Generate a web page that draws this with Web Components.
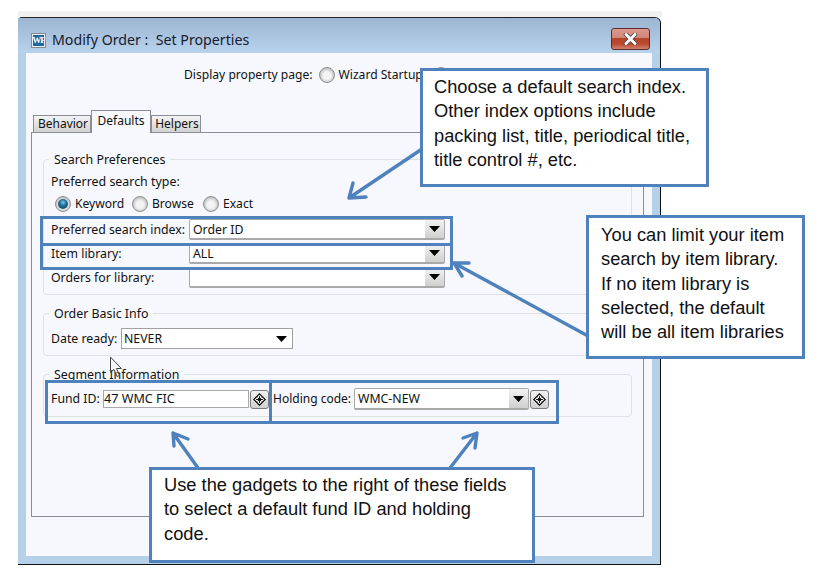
<!DOCTYPE html>
<html>
<head>
<meta charset="utf-8">
<style>
    html, body { margin: 0; height: 574px; overflow: hidden; background: #fff; }
    call-out.index { left: 420px; top: 68px; width: 289px; height: 119px; padding-top: 4px; }
    call-out.library { left: 586px; top: 215px; width: 219px; height: 144px; padding: 5px 0 0 12px; }
    call-out.gadgets { left: 149px; top: 467px; width: 386px; height: 96px; padding: 3px 0 0 12px; }
    hi-box.a { left: 40px; top: 216px; width: 413px; height: 30px; }
    hi-box.b { left: 40px; top: 243px; width: 413px; height: 27px; }
    hi-box.c { left: 45px; top: 380px; width: 227px; height: 44px; }
    hi-box.d { left: 269px; top: 380px; width: 290px; height: 44px; }
</style>
</head>
<body>

<app-window heading="Modify Order :  Set Properties">
    <page-switch></page-switch>
    <tab-strip>
        <ui-group heading="Search Preferences" style="--h:137px">
            <div style="font:12.4px/16px 'Noto Sans',sans-serif;color:#111;margin:6px 0 0 7px">Preferred search type:</div>
            <radio-row></radio-row>
            <combo-row label="Preferred search index:" value="Order ID"></combo-row>
            <combo-row label="Item library:" value="ALL"></combo-row>
            <combo-row label="Orders for library:" value=""></combo-row>
        </ui-group>
        <ui-group heading="Order Basic Info" style="--h:44px">
            <date-row></date-row>
        </ui-group>
        <ui-group heading="Segment Information" style="--h:44px">
            <segment-row></segment-row>
        </ui-group>
    </tab-strip>
</app-window>

<hi-box class="a"></hi-box>
<hi-box class="b"></hi-box>
<hi-box class="c"></hi-box>
<hi-box class="d"></hi-box>

<note-arrows></note-arrows>

<call-out class="index">Choose a default search index.<br>Other index options include<br>packing list, title, periodical title,<br>title control #, etc.</call-out>
<call-out class="library">You can limit your item<br>search by item library.<br>If no item library is<br>selected, the default<br>will be all item libraries</call-out>
<call-out class="gadgets">Use the gadgets to the right of these fields<br>to select a default fund ID and holding<br>code.</call-out>

<script>
const UI_FONT = "12.3px/16px 'Noto Sans', sans-serif";

class AppWindow extends HTMLElement {
    constructor(){
        super();
        this.attachShadow({mode: "open"});
    }
    connectedCallback(){
        this.shadowRoot.innerHTML = `
        <style>
            :host { display: block; width: 644px; margin: 11px 0 0 18px; }
            .strip { height: 6px; background: #f0f0f0; }
            .frame {
                height: 548px;
                margin-right: 1px;
                box-sizing: border-box;
                display: flex;
                flex-direction: column;
                border-top: 1px solid #222;
                border-right: 1px solid #111;
                border-bottom: 1px solid #111;
                border-top-left-radius: 4px;
                border-top-right-radius: 6px;
                background: #b7d0ea;
            }
            .title {
                height: 35px;
                box-sizing: border-box;
                padding-top: 9px;
                flex: none;
                display: flex;
                align-items: center;
                padding-left: 13px;
                gap: 6px;
                background: linear-gradient(#9bb5d2, #b9d2ec);
                border-top-right-radius: 6px;
            }
            .icon {
                width: 13px; height: 13px;
                border: 1px solid #8a8a8a;
                outline: 1px solid #e8eef4;
                outline-offset: -2px;
                background: #1d6a9c;
                color: #fff;
                font: bold 9px/13px "Liberation Serif", serif;
                text-align: center;
                letter-spacing: -1px;
            }
            .text {
                font: 14.2px/18px "Noto Sans", sans-serif;
                color: #16202c;
                white-space: pre;
            }
            .close {
                margin-left: auto;
                margin-right: 10px;
                margin-top: -2px;
                width: 39px; height: 22px;
                box-sizing: border-box;
                border: 1px solid #5a2a30;
                border-radius: 3px;
                background: linear-gradient(#dc9a8c 0, #cf8576 44%, #b5432b 46%, #bb4a30 75%, #d0836f 100%);
                display: flex;
                align-items: center;
                justify-content: center;
            }
            .client {
                flex: 1;
                margin: 0 8px 8px 8px;
                background: #f7f8fd;
                padding: 13px 8px 39px 5px;
                display: flex;
                flex-direction: column;
            }
        </style>
        <div class="strip"></div>
        <div class="frame">
            <div class="title">
                <span class="icon">WF</span>
                <span class="text">${this.getAttribute("heading")}</span>
                <span class="close">
                    <svg width="15" height="12" viewBox="0 0 15 12">
                        <path d="M3 1.5 L12 10.5 M12 1.5 L3 10.5" stroke="#4a3a3a" stroke-width="4.4" stroke-linecap="round" fill="none"/>
                        <path d="M3 1.5 L12 10.5 M12 1.5 L3 10.5" stroke="#fff" stroke-width="3" stroke-linecap="round" fill="none"/>
                    </svg>
                </span>
            </div>
            <div class="client"><slot></slot></div>
        </div>`;
    }
}

class UiRadio extends HTMLElement {
    constructor(){
        super();
        this.attachShadow({mode: "open"});
    }
    connectedCallback(){
        const on = this.hasAttribute("checked");
        this.shadowRoot.innerHTML = `
        <style>
            :host { display: inline-flex; align-items: center; gap: 4px; font: 12.1px/16px 'Noto Sans', sans-serif; color: #111; }
            i {
                width: 16px; height: 16px;
                flex: none;
                box-sizing: border-box;
                border-radius: 50%;
                border: 1px solid #8f8f8f;
                background: radial-gradient(circle at 50% 55%, #f4f4f4 0 35%, #c4c4c4 70%, #dedede 100%);
                display: flex;
                align-items: center;
                justify-content: center;
            }
            b {
                display: ${on ? "block" : "none"};
                width: 10px; height: 10px;
                border-radius: 50%;
                background: radial-gradient(circle at 50% 35%, #7fc7e8 0, #1f6f9a 40%, #0c3a58 100%);
            }
        </style>
        <i><b></b></i><slot></slot>`;
    }
}

class PageSwitch extends HTMLElement {
    constructor(){
        super();
        this.attachShadow({mode: "open"});
    }
    connectedCallback(){
        this.shadowRoot.innerHTML = `
        <style>
            :host { display: flex; align-items: center; height: 18px; padding-left: 153px; font: 12.1px/16px 'Noto Sans', sans-serif; color: #111; }
            span { margin-right: 6px; }
            ui-radio + ui-radio { margin-left: 10px; }
        </style>
        <span>Display property page:</span>
        <ui-radio>Wizard Startup</ui-radio>
        <ui-radio></ui-radio>`;
    }
}

class TabStrip extends HTMLElement {
    constructor(){
        super();
        this.attachShadow({mode: "open"});
    }
    connectedCallback(){
        this.shadowRoot.innerHTML = `
        <style>
            :host { display: flex; flex-direction: column; flex: 1; margin-top: 26px; font: 12px/16px 'Noto Sans', sans-serif; color: #111; }
            .tabs { display: flex; align-items: flex-end; height: 22px; padding-left: 2px; position: relative; z-index: 1; }
            .tab {
                box-sizing: border-box;
                height: 17px;
                border: 1px solid #8c8c94;
                border-bottom: 0;
                background: linear-gradient(#f4f4f4, #d2d2d2);
                line-height: 15px;
                padding-left: 2px;
                text-align: center;
            }
            .tab.on {
                height: 23px;
                margin-bottom: -1px;
                padding-left: 0;
                background: #f7f8fd;
                line-height: 20px;
            }
            .panel {
                flex: 1;
                box-sizing: border-box;
                border: 1px solid #8c8c94;
                padding: 17px 11px 0 11px;
                display: flex;
                flex-direction: column;
                gap: 9px;
            }
        </style>
        <div class="tabs">
            <div class="tab" style="width:58px">Behavior</div>
            <div class="tab on" style="width:60px">Defaults</div>
            <div class="tab" style="width:50px">Helpers</div>
        </div>
        <div class="panel"><slot></slot></div>`;
    }
}

class UiGroup extends HTMLElement {
    constructor(){
        super();
        this.attachShadow({mode: "open"});
    }
    connectedCallback(){
        this.shadowRoot.innerHTML = `
        <style>
            :host { display: block; font: 12.4px/16px 'Noto Sans', sans-serif; color: #111; }
            fieldset {
                margin: 0;
                padding: 0;
                border: 1px solid #dde2e8;
                border-radius: 4px;
                height: calc(var(--h) + 8px);
                box-sizing: border-box;
            }
            legend { margin-left: 5px; padding: 2px 5px 0; line-height: 16px; }
        </style>
        <fieldset><legend>${this.getAttribute("heading")}</legend><slot></slot></fieldset>`;
    }
}

class RadioRow extends HTMLElement {
    constructor(){
        super();
        this.attachShadow({mode: "open"});
    }
    connectedCallback(){
        this.shadowRoot.innerHTML = `
        <style>
            :host { display: flex; align-items: center; height: 16px; margin: 6px 0 7px 11px; }
            ui-radio:nth-of-type(1) { width: 77px; }
            ui-radio:nth-of-type(2) { width: 71px; }
        </style>
        <ui-radio checked>Keyword</ui-radio>
        <ui-radio>Browse</ui-radio>
        <ui-radio>Exact</ui-radio>`;
    }
}

const ARROW = `<svg width="11" height="6" viewBox="0 0 11 6"><path d="M0 0H11L5.5 6Z" fill="#000"/></svg>`;

class ComboRow extends HTMLElement {
    constructor(){
        super();
        this.attachShadow({mode: "open"});
    }
    connectedCallback(){
        this.shadowRoot.innerHTML = `
        <style>
            :host { display: flex; align-items: center; height: 21px; margin: 0 0 3px 7px; font: ${UI_FONT}; color: #111; }
            label { width: 138px; flex: none; white-space: nowrap; }
            ui-combo { width: 256px; height: 21px; }
        </style>
        <label>${this.getAttribute("label")}</label>
        <ui-combo>${this.getAttribute("value")}</ui-combo>`;
    }
}

class UiCombo extends HTMLElement {
    constructor(){
        super();
        this.attachShadow({mode: "open"});
    }
    connectedCallback(){
        this.shadowRoot.innerHTML = `
        <style>
            :host { display: flex; box-sizing: border-box; border: 1px solid #a9a9a9; border-bottom-width: 2px; border-radius: 2px; background: #fff; font: ${UI_FONT}; color: #111; }
            .v { flex: 1; padding: 1px 0 0 3px; line-height: 18px; white-space: nowrap; }
            .b { width: 19px; background: linear-gradient(#f2f2f2, #cfcfcf); display: flex; align-items: center; justify-content: center; }
        </style>
        <div class="v"><slot></slot></div>
        <div class="b">${ARROW}</div>`;
    }
}

class UiGadget extends HTMLElement {
    constructor(){
        super();
        this.attachShadow({mode: "open"});
    }
    connectedCallback(){
        this.shadowRoot.innerHTML = `
        <style>
            :host { display: flex; flex: none; width: 19px; height: 19px; box-sizing: border-box; border: 1px solid #7d7d7d; border-radius: 3px; background: linear-gradient(#f2f2f2, #d0d0d0); align-items: center; justify-content: center; }
        </style>
        <svg width="13" height="13" viewBox="0 0 13 13" fill="none">
            <path d="M6.5 .8 12.2 6.5 6.5 12.2 .8 6.5Z" stroke="#000" stroke-width="1.1" fill="#fff"/>
            <path d="M6.5 3V10M3 6.5H10M4.6 4.6 8.4 8.4M8.4 4.6 4.6 8.4" stroke="#000" stroke-width=".9"/>
        </svg>`;
    }
}

class DateRow extends HTMLElement {
    constructor(){
        super();
        this.attachShadow({mode: "open"});
    }
    connectedCallback(){
        this.shadowRoot.innerHTML = `
        <style>
            :host { display: flex; align-items: center; height: 21px; margin: 6px 0 0 7px; font: ${UI_FONT}; color: #111; }
            label { width: 70px; flex: none; white-space: nowrap; }
            .sel { width: 172px; height: 21px; box-sizing: border-box; border: 1px solid #a0a0a0; background: #fff; display: flex; align-items: center; justify-content: space-between; padding: 0 5px 0 2px; }
        </style>
        <label>Date ready:</label>
        <div class="sel"><span>NEVER</span>${ARROW}</div>`;
    }
}

class SegmentRow extends HTMLElement {
    constructor(){
        super();
        this.attachShadow({mode: "open"});
    }
    connectedCallback(){
        this.shadowRoot.innerHTML = `
        <style>
            :host { display: flex; align-items: center; height: 22px; margin: 5px 0 0 7px; font: ${UI_FONT}; color: #111; }
            label { white-space: nowrap; flex: none; }
            .fund { width: 52px; }
            .hold { width: 81px; margin-left: 4px; font-size: 12px; }
            .input { width: 146px; height: 18px; box-sizing: border-box; border: 1px solid #a9a9a9; background: #fff; line-height: 15px; white-space: nowrap; font-size: 12.6px; }
            ui-gadget { margin-left: 1px; }
            ui-combo { width: 175px; height: 22px; }
        </style>
        <label class="fund">Fund ID:</label>
        <div class="input">47 WMC FIC</div>
        <ui-gadget></ui-gadget>
        <label class="hold">Holding code:</label>
        <ui-combo>WMC-NEW</ui-combo>
        <ui-gadget></ui-gadget>`;
    }
}

class CallOut extends HTMLElement {
    constructor(){
        super();
        this.attachShadow({mode: "open"});
    }
    connectedCallback(){
        this.shadowRoot.innerHTML = `
        <style>
            :host {
                position: absolute;
                box-sizing: border-box;
                border: 3px solid #4f81bd;
                background: #fff;
                padding: 6px 0 0 11px;
                font: 18.3px/24.3px "Liberation Sans", sans-serif;
                color: #111;
                white-space: nowrap;
            }
        </style>
        <slot></slot>`;
    }
}

class HiBox extends HTMLElement {
    constructor(){
        super();
        this.attachShadow({mode: "open"});
    }
    connectedCallback(){
        this.shadowRoot.innerHTML = `
        <style>
            :host { position: absolute; box-sizing: border-box; border: 3px solid #4f81bd; }
        </style>`;
    }
}

class NoteArrows extends HTMLElement {
    constructor(){
        super();
        this.attachShadow({mode: "open"});
    }
    connectedCallback(){
        this.shadowRoot.innerHTML = `
        <style>
            :host { position: absolute; left: 0; top: 0; width: 820px; height: 574px; pointer-events: none; }
            svg { display: block; }
        </style>
        <svg width="820" height="574" viewBox="0 0 820 574" fill="none" stroke="#4f81bd" stroke-width="3.4" stroke-linecap="round" stroke-linejoin="round">
            <path d="M349 198 422 149M353 183 349 198 366 197"/>
            <path d="M454 263 588 336M469 263 454 263 462 276"/>
            <path d="M173 433 198 468M174 446 173 433 188 439"/>
            <path d="M477 433 450 468M463 438 477 433 475 448"/>
            <path d="M110.5 357.5V372.5L114 369.5 117 376.5 119.5 375.5 116.5 368.5H121Z" stroke="#444" stroke-width="1" fill="#f7f8fd" fill-opacity=".35"/>
        </svg>`;
    }
}

customElements.define("app-window", AppWindow);
customElements.define("ui-radio", UiRadio);
customElements.define("page-switch", PageSwitch);
customElements.define("tab-strip", TabStrip);
customElements.define("ui-group", UiGroup);
customElements.define("radio-row", RadioRow);
customElements.define("combo-row", ComboRow);
customElements.define("ui-combo", UiCombo);
customElements.define("ui-gadget", UiGadget);
customElements.define("date-row", DateRow);
customElements.define("segment-row", SegmentRow);
customElements.define("call-out", CallOut);
customElements.define("hi-box", HiBox);
customElements.define("note-arrows", NoteArrows);
</script>
</body>
</html>
